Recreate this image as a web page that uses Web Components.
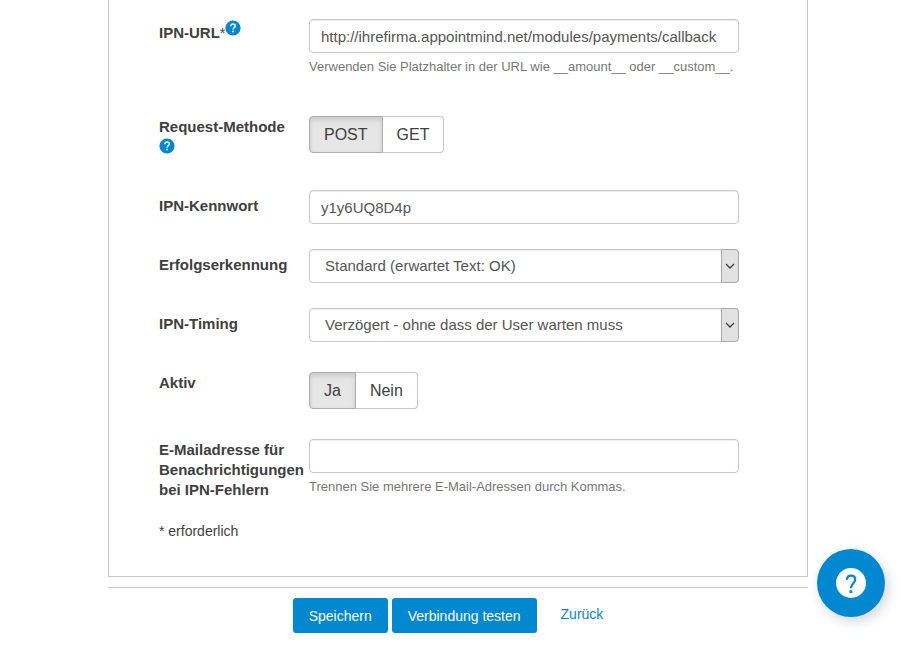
<!DOCTYPE html>
<html lang="de">
<head>
<meta charset="utf-8">
<title>IPN-Einstellungen</title>
<style>
  body { margin: 0; padding-left: 1px; background: #fff; color: #404040; font: 14px/20px "Liberation Sans", Arial, sans-serif; }
</style>
</head>
<body>
<settings-page>
  <form-row style="--pad: 4px; --after: 39px" label="IPN-URL" required help type="text" value="http://ihrefirma.appointmind.net/modules/payments/callback" hint="Verwenden Sie Platzhalter in der URL wie __amount__ oder __custom__."></form-row>
  <form-row style="--pad: 1px; --after: 33px" label="Request-Methode" help type="choice" options="POST|GET"></form-row>
  <form-row style="--after: 25px" label="IPN-Kennwort" type="text" value="y1y6UQ8D4p"></form-row>
  <form-row style="--after: 25px" label="Erfolgserkennung" type="select" options="Standard (erwartet Text: OK)"></form-row>
  <form-row style="--after: 30px" label="IPN-Timing" type="select" options="Verzögert - ohne dass der User warten muss"></form-row>
  <form-row style="--pad: 1px; --after: 30px" label="Aktiv" type="choice" options="Ja|Nein"></form-row>
  <form-row style="--pad: 1px; --after: 21px" label="E-Mailadresse für Benachrichtigungen bei IPN-Fehlern" type="text" value="" hint="Trennen Sie mehrere E-Mail-Adressen durch Kommas."></form-row>
  <span>* erforderlich</span>
  <action-bar slot="actions"></action-bar>
</settings-page>
<help-bubble></help-bubble>

<script>
class SettingsPage extends HTMLElement {
  constructor() {
    super();
    this.attachShadow({ mode: 'open' }).innerHTML = `
      <style>
        :host { display: block; max-width: 700px; margin: 0 auto; }
        main { border: 1px solid #c8c8c8; border-top: 0; padding: 19px 68px 35px 50px; }
      </style>
      <main><slot></slot></main>
      <slot name="actions"></slot>`;
  }
}

class HelpIcon extends HTMLElement {
  constructor() {
    super();
    this.attachShadow({ mode: 'open' }).innerHTML = `
      <style>
        :host { display: inline-block; }
        button { display: block; width: 16px; height: 16px; padding: 0; border: 0; background: none; cursor: pointer; }
        svg { display: block; width: 16px; height: 16px; }
      </style>
      <button type="button" aria-label="Hilfe">
        <svg viewBox="0 0 16 16"><circle cx="8" cy="8" r="7.6" fill="#0288d1"/>
          <path d="M5.8 6.2C5.9 4.7 6.8 4 8.1 4s2.2.8 2.2 2c0 1.7-2.2 1.7-2.2 3.5" fill="none" stroke="#fff" stroke-width="1.5"/>
          <rect x="7.2" y="10.7" width="1.7" height="1.6" fill="#fff"/></svg>
      </button>`;
  }
}

class FormRow extends HTMLElement {
  connectedCallback() {
    if (this.shadowRoot) return;
    const get = n => this.getAttribute(n) || '';
    const options = get('options').split('|');
    const type = get('type');
    let control;
    if (type === 'choice') {
      control = `<div class="group" role="radiogroup" aria-labelledby="label">${options.map((o, i) =>
        `<label><input type="radio" name="choice" ${i ? '' : 'checked'}><span>${o}</span></label>`).join('')}</div>`;
    } else if (type === 'select') {
      control = `<div class="select"><select id="control">${options.map(o => `<option>${o}</option>`).join('')}</select>
        <span class="arrow"><svg viewBox="0 0 10 6"><path d="M1 1l4 4 4-4" fill="none" stroke="#404040" stroke-width="1.3"/></svg></span></div>`;
    } else {
      control = `<input class="text" id="control" type="text" value="${get('value')}">`;
    }
    const title = get('label') + (this.hasAttribute('required') ? '<span class="star">*</span>' : '');
    const tag = type === 'choice' ? `<span id="label">${title}</span>` : `<label for="control">${title}</label>`;
    const help = !this.hasAttribute('help') ? '' :
      type === 'choice' ? '<div class="below"><help-icon></help-icon></div>' : '<help-icon class="raised"></help-icon>';
    this.attachShadow({ mode: 'open' }).innerHTML = `
      <style>
        :host { display: grid; grid-template-columns: 150px minmax(0, 1fr); align-items: start; margin-bottom: var(--after); }
        * { box-sizing: border-box; }
        .title { padding-top: var(--pad, 6px); font-size: 15px; font-weight: bold; }
        .star { font-size: 14px; font-weight: normal; }
        .below { display: flex; height: 20px; padding-top: 1px; }
        .raised { vertical-align: super; margin: -4px 0; }
        .text, select { display: block; width: 100%; height: 34px; margin: 0; border: 1px solid #c8c8c8; border-radius: 4px; background: #fff; color: #555; font: 15px/20px "Liberation Sans", Arial, sans-serif; box-shadow: inset 0 1px 1px rgba(0,0,0,.07); }
        .text { padding: 6px 11px; }
        .select { display: grid; grid-template-columns: minmax(0, 1fr) 18px; }
        select { appearance: none; grid-area: 1 / 1 / 2 / 3; padding: 6px 15px; }
        .arrow { grid-area: 1 / 2; display: grid; place-items: center; border: 1px solid #a9a9a9; border-radius: 0 4px 4px 0; background: #e1e1e1; pointer-events: none; }
        .arrow svg { width: 10px; height: 6px; }
        .hint { margin: 4px 0 0; color: #777; font-size: 13px; line-height: 20px; }
        .group { display: flex; }
        .group label { position: relative; display: block; cursor: pointer; font-size: 16px; line-height: 21px; }
        .group input { position: absolute; opacity: 0; margin: 0; }
        .group span { display: block; height: 37px; padding: 7px 14px; border: 1px solid #c8c8c8; background: #fff; }
        .group label:first-child span { border-radius: 4px 0 0 4px; }
        .group label:last-child span { border-radius: 0 4px 4px 0; border-left: 0; }
        .group input:checked + span { background: #e6e6e6; border-color: #adadad; box-shadow: inset 0 3px 5px rgba(0,0,0,.125); }
      </style>
      <div class="title">${tag}${help}</div>
      <div>${control}${get('hint') ? `<p class="hint">${get('hint')}</p>` : ''}</div>`;
  }
}

class ActionBar extends HTMLElement {
  constructor() {
    super();
    this.attachShadow({ mode: 'open' }).innerHTML = `
      <style>
        :host { display: flex; justify-content: center; gap: 4px; margin-top: 10px; padding: 10px 0 14px; border-top: 1px solid #c8c8c8; }
        button { height: 35px; padding: 0 16px; border: 0; border-radius: 3px; background: #0288d1; color: #fff; font: 14px/20px "Liberation Sans", Arial, sans-serif; cursor: pointer; }
        a { padding: 6px 20px; color: #0288d1; text-decoration: none; }
      </style>
      <button type="submit">Speichern</button>
      <button type="button">Verbindung testen</button>
      <a href="#">Zurück</a>`;
  }
}

class HelpBubble extends HTMLElement {
  constructor() {
    super();
    this.attachShadow({ mode: 'open' }).innerHTML = `
      <style>
        :host { display: block; position: fixed; right: 30px; bottom: 30px; }
        button { display: grid; place-items: center; width: 68px; height: 68px; padding: 0; border: 0; border-radius: 50%; background: #0288d1; box-shadow: 3px 4px 12px rgba(40,60,90,.22); cursor: pointer; }
        svg { width: 30px; height: 30px; }
      </style>
      <button type="button" aria-label="Hilfe öffnen">
        <svg viewBox="0 0 30 30"><circle cx="15" cy="15" r="15" fill="#fff"/>
          <path d="M10.9 11.8C11 9 12.6 7.7 15.1 7.7c2.5 0 4.1 1.4 4.1 3.8 0 3.9-4.3 4.3-4.3 8.7" fill="none" stroke="#0288d1" stroke-width="2.2"/>
          <rect x="13.5" y="22.3" width="2.8" height="2.8" fill="#0288d1"/></svg>
      </button>`;
  }
}

customElements.define('help-icon', HelpIcon);
customElements.define('form-row', FormRow);
customElements.define('action-bar', ActionBar);
customElements.define('help-bubble', HelpBubble);
customElements.define('settings-page', SettingsPage);
</script>
</body>
</html>
